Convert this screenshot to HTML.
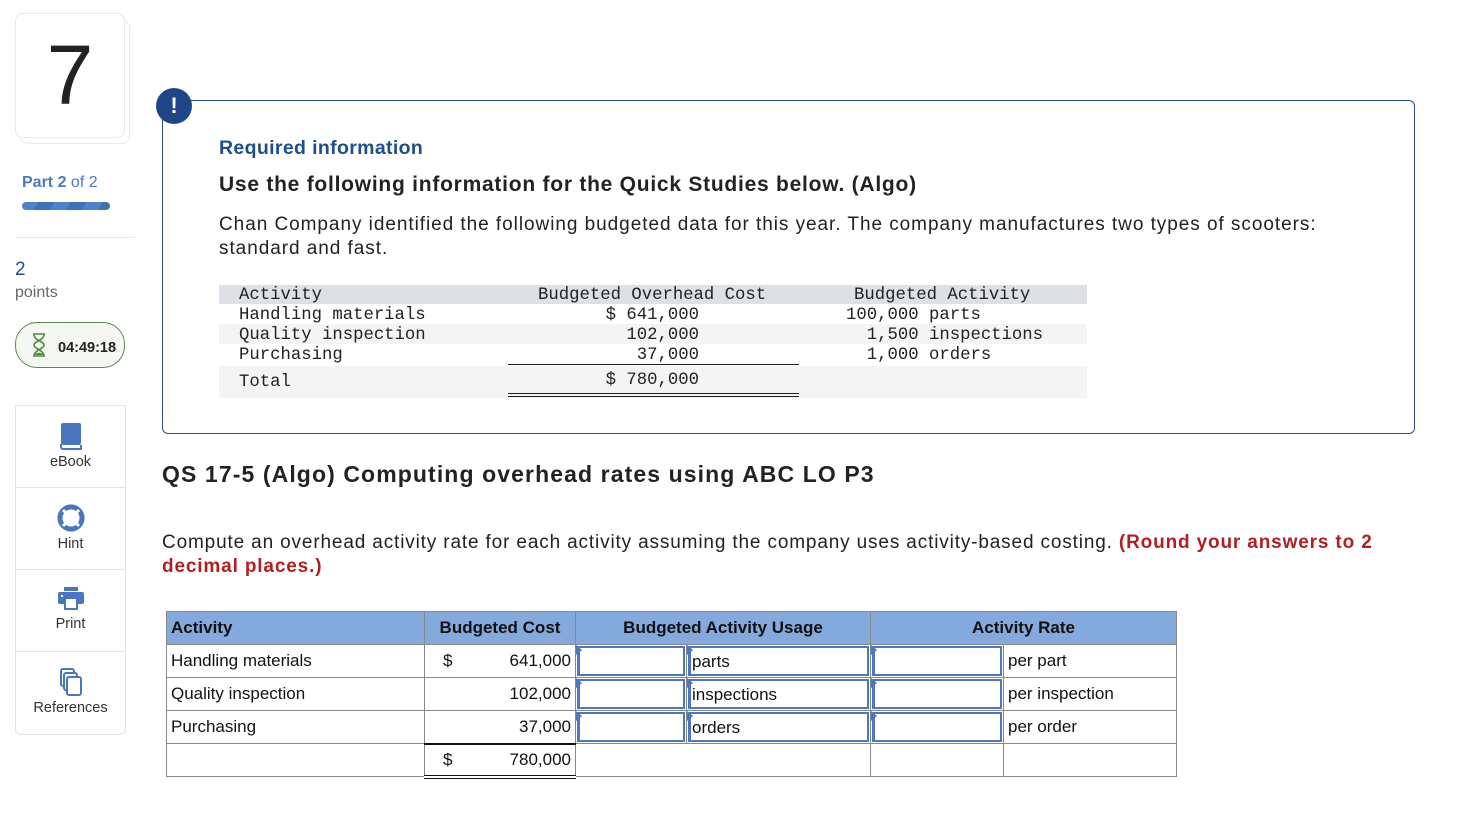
<!DOCTYPE html>
<html><head><meta charset="utf-8"><style>
body{margin:0;width:1474px;height:838px;background:#fff;font-family:"Liberation Sans",sans-serif;color:#222;position:relative;overflow:hidden}
.a{position:absolute;white-space:nowrap}
.mono{font-family:"Liberation Mono",monospace;font-size:17.3px;color:#222}
.side{position:absolute;left:15px;width:109px;border:1px solid #e4e4e4;background:#fff;text-align:center;font-size:14.5px;color:#333}
table.t{position:absolute;left:166px;top:611px;border-collapse:collapse;font-size:17px;color:#111}
table.t td{border:1px solid #888;height:33px;padding:0 4px;box-sizing:border-box}
table.t tr{height:33px}
table.t tr.h td{background:#84a9dd;font-weight:bold}
.inp{position:relative;padding:0!important}
.inp div{position:absolute;inset:1px;border:2px solid #4d78bf;border-left-width:3px;background:#fff;line-height:28px;font-size:17px}
.inp .tri{position:absolute;left:0;top:0;width:0;height:0;border-top:5px solid transparent;border-bottom:5px solid transparent;border-left:6px solid #4d78bf;z-index:2}
.txt{padding-left:1px}
</style></head><body>
<div class="a" style="left:20px;top:20px;width:108px;height:122px;border:1px solid #e8e8e8;border-radius:8px"></div>
<div class="a" style="left:15px;top:13px;width:108px;height:123px;border:1px solid #e8e8e8;border-radius:8px;background:#fff;text-align:center;font-size:84px;line-height:123px;color:#222">7</div>
<div class="a" style="left:22px;top:174px;font-size:16px;color:#4a7bc0"><b>Part 2</b> of 2</div>
<div class="a" style="left:22px;top:202px;width:88px;height:8px;border-radius:4px;background:repeating-linear-gradient(120deg,#4c82cc 0 14px,#3f71b8 14px 28px)"></div>
<div class="a" style="left:15px;top:237px;width:120px;height:1px;background:#e5e5e5"></div>
<div class="a" style="left:15px;top:259px;font-size:19px;color:#1f4e8c">2</div>
<div class="a" style="left:15px;top:284px;font-size:16px;color:#666">points</div>
<div class="a" style="left:15px;top:322px;width:108px;height:44px;border:1px solid #5a8a4a;border-radius:22px;background:#f5f7f3"></div>
<svg class="a" style="left:31px;top:333px" width="16" height="24" viewBox="0 0 16 24"><path d="M2 1h12M2 23h12M3 1c0 7 10 7 10 11M13 1c0 7-10 7-10 11M3 12c0 4 10 5 10 11M13 12c0 4-10 5-10 11" stroke="#4e8a3e" stroke-width="1.6" fill="none"/><path d="M4 22c1-3 7-3 8 0z" fill="#4e8a3e"/></svg>
<div class="a" style="left:58px;top:340px;font-size:14.5px;font-weight:bold;color:#222">04:49:18</div>

<div class="side" style="top:405px;height:82px"><svg style="margin-top:16px" width="24" height="28" viewBox="0 0 24 28"><rect x="2" y="1" width="20" height="22" rx="2" fill="#4a76bd"/><path d="M2 22v3a2 2 0 0 0 2 2h18v-4" fill="none" stroke="#4a76bd" stroke-width="2"/></svg><div>eBook</div></div>
<div class="side" style="top:487px;height:82px"><svg style="margin-top:16px" width="28" height="28" viewBox="0 0 28 28"><circle cx="14" cy="14" r="11" fill="none" stroke="#4a76bd" stroke-width="5"/><circle cx="14" cy="14" r="13" fill="none" stroke="#4a76bd" stroke-width="1"/><g stroke="#fff" stroke-width="3"><path d="M6 6l4 4M22 6l-4 4M6 22l4-4M22 22l-4-4"/></g></svg><div>Hint</div></div>
<div class="side" style="top:569px;height:82px"><svg style="margin-top:16px" width="28" height="26" viewBox="0 0 28 26"><rect x="7" y="1" width="14" height="4" fill="#4a76bd"/><rect x="1" y="6" width="26" height="12" rx="2" fill="#4a76bd"/><rect x="8" y="12" width="12" height="11" fill="#fff" stroke="#4a76bd" stroke-width="2"/><circle cx="5" cy="10" r="1.2" fill="#fff"/></svg><div>Print</div></div>
<div class="side" style="top:651px;height:82px;border-radius:0 0 6px 6px"><svg style="margin-top:16px" width="26" height="28" viewBox="0 0 26 28"><rect x="3" y="1" width="13" height="17" rx="2" fill="#fff" stroke="#4a76bd" stroke-width="2"/><rect x="6" y="5" width="13" height="17" rx="2" fill="#fff" stroke="#4a76bd" stroke-width="2"/><rect x="9" y="9" width="14" height="18" rx="2" fill="#fff" stroke="#4a76bd" stroke-width="2"/></svg><div>References</div></div>

<div class="a" style="left:162px;top:100px;width:1251px;height:332px;border:1px solid #2a4e8a;border-radius:6px"></div>
<div class="a" style="left:156px;top:88px;width:36px;height:36px;border-radius:50%;background:#1f4686;color:#fff;font-weight:bold;font-size:22px;text-align:center;line-height:36px">!</div>
<div class="a" style="left:219px;top:137px;font-size:19.5px;font-weight:bold;color:#1f4e8c;letter-spacing:0.35px">Required information</div>
<div class="a" style="left:219px;top:173px;font-size:21px;font-weight:bold;color:#222;letter-spacing:0.75px">Use the following information for the Quick Studies below. (Algo)</div>
<div class="a" style="left:219px;top:213px;font-size:19px;line-height:24px;color:#222;white-space:normal;width:1110px;letter-spacing:0.95px">Chan Company identified the following budgeted data for this year. The company manufactures two types of scooters: standard and fast.</div>

<div class="a" style="left:219px;top:285px;width:868px;height:19px;background:#dde0e6"></div>
<div class="a" style="left:219px;top:324px;width:868px;height:20px;background:#f4f4f4"></div>
<div class="a" style="left:219px;top:366px;width:868px;height:32px;background:#f4f4f4"></div>
<div class="a" style="left:508px;top:364px;width:291px;height:1px;background:#222"></div>
<div class="a" style="left:508px;top:393px;width:291px;height:1px;background:#222"></div>
<div class="a" style="left:508px;top:396px;width:291px;height:1px;background:#222"></div>
<div class="a mono" style="left:239px;top:286px;line-height:20px">Activity<br>Handling materials<br>Quality inspection<br>Purchasing</div>
<div class="a mono" style="left:239px;top:373px">Total</div>
<div class="a mono" style="left:538px;top:286px">Budgeted Overhead Cost</div>
<div class="a mono" style="left:508px;width:191px;text-align:right;top:306px;line-height:20px">$ 641,000<br>102,000<br>37,000</div>
<div class="a mono" style="left:508px;width:191px;text-align:right;top:371px">$ 780,000</div>
<div class="a mono" style="left:854px;top:286px">Budgeted Activity</div>
<div class="a mono" style="left:846px;top:306px;line-height:20px">100,000 parts<br>&nbsp;&nbsp;1,500 inspections<br>&nbsp;&nbsp;1,000 orders</div>

<div class="a" style="left:162px;top:461px;font-size:23px;font-weight:bold;color:#222;letter-spacing:1.1px">QS 17-5 (Algo) Computing overhead rates using ABC LO P3</div>
<div class="a" style="left:162px;top:531px;font-size:19px;line-height:24px;white-space:normal;width:1222px;color:#222;letter-spacing:0.85px">Compute an overhead activity rate for each activity assuming the company uses activity-based costing. <b style="color:#b11f1f">(Round your answers to 2 decimal places.)</b></div>

<table class="t">
<colgroup><col style="width:258px"><col style="width:151px"><col style="width:111px"><col style="width:184px"><col style="width:133px"><col style="width:173px"></colgroup>
<tr class="h"><td>Activity</td><td style="text-align:center">Budgeted Cost</td><td colspan="2" style="text-align:center">Budgeted Activity Usage</td><td colspan="2" style="text-align:center">Activity Rate</td></tr>
<tr><td>Handling materials</td><td><span style="float:left;padding-left:14px">$</span><span style="float:right">641,000</span></td><td class="inp"><span class="tri"></span><div></div></td><td class="inp"><span class="tri"></span><div><span class="txt">parts</span></div></td><td class="inp"><span class="tri"></span><div></div></td><td>per part</td></tr>
<tr><td>Quality inspection</td><td style="text-align:right">102,000</td><td class="inp"><span class="tri"></span><div></div></td><td class="inp"><span class="tri"></span><div><span class="txt">inspections</span></div></td><td class="inp"><span class="tri"></span><div></div></td><td>per inspection</td></tr>
<tr><td>Purchasing</td><td style="text-align:right">37,000</td><td class="inp"><span class="tri"></span><div></div></td><td class="inp"><span class="tri"></span><div><span class="txt">orders</span></div></td><td class="inp"><span class="tri"></span><div></div></td><td>per order</td></tr>
<tr><td></td><td style="border-top:2px solid #111;border-bottom:4px double #111"><span style="float:left;padding-left:14px">$</span><span style="float:right">780,000</span></td><td colspan="2"></td><td></td><td></td></tr>
</table>
</body></html>
